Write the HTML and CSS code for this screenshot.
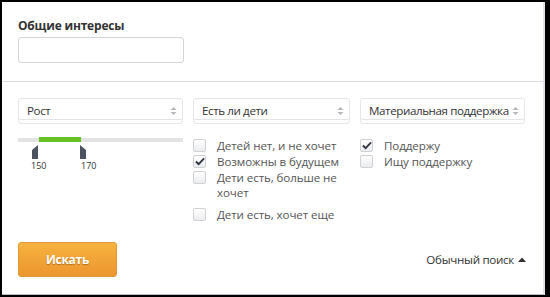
FILE: index.html
```html
<!DOCTYPE html>
<html lang="ru">
<head>
<meta charset="utf-8">
<link rel="stylesheet" href="styles.css">
</head>
<body>
<div class="panel">
  <div class="top">
    <div class="title">Общие интересы</div>
    <div class="input"></div>
  </div>
  <div class="filters">
    <div class="col">
      <div class="select"><span>Рост</span><svg class="arr" width="7" height="10" viewBox="0 0 7 10"><path d="M3.5 1 L6.5 4 H0.5 Z M3.5 9 L6.5 6 H0.5 Z" fill="#b5b8bd"/></svg></div>
      <div class="slider">
        <div class="track"><div class="fill"></div></div>
        <div class="handles">
          <div class="handle">
            <svg width="8" height="14" viewBox="0 0 8 14"><path d="M1 5 L7 0 V14 H1 Z" fill="#4b5362"/></svg>
            <span>150</span>
          </div>
          <div class="handle h2">
            <svg width="8" height="14" viewBox="0 0 8 14"><path d="M1 0 L7 5 V14 H1 Z" fill="#4b5362"/></svg>
            <span>170</span>
          </div>
        </div>
      </div>
    </div>
    <div class="col mid">
      <div class="select"><span>Есть ли дети</span><svg class="arr" width="7" height="10" viewBox="0 0 7 10"><path d="M3.5 1 L6.5 4 H0.5 Z M3.5 9 L6.5 6 H0.5 Z" fill="#b5b8bd"/></svg></div>
      <ul class="checks">
        <li><i class="cb"></i><span>Детей нет, и не хочет</span></li>
        <li><i class="cb on"><svg width="11" height="9" viewBox="0 0 11 9"><path d="M1 4.5 L4 7.5 L10 1" fill="none" stroke="#2f3540" stroke-width="2"/></svg></i><span>Возможны в будущем</span></li>
        <li class="wrap"><i class="cb"></i><span>Дети есть, больше не хочет</span></li>
        <li><i class="cb"></i><span>Дети есть, хочет еще</span></li>
      </ul>
    </div>
    <div class="col">
      <div class="select"><span>Материальная поддержка</span><svg class="arr" width="7" height="10" viewBox="0 0 7 10"><path d="M3.5 1 L6.5 4 H0.5 Z M3.5 9 L6.5 6 H0.5 Z" fill="#b5b8bd"/></svg></div>
      <ul class="checks">
        <li><i class="cb on"><svg width="11" height="9" viewBox="0 0 11 9"><path d="M1 4.5 L4 7.5 L10 1" fill="none" stroke="#2f3540" stroke-width="2"/></svg></i><span>Поддержу</span></li>
        <li><i class="cb"></i><span>Ищу поддержку</span></li>
      </ul>
    </div>
  </div>
  <div class="actions">
    <button class="btn">Искать</button>
    <a class="simple">Обычный поиск <svg width="8" height="5" viewBox="0 0 8 5"><path d="M0 5 L4 0.5 L8 5 Z" fill="#333"/></svg></a>
  </div>
</div>
</body>
</html>
```
FILE: styles.css
```css
html, body {
  margin: 0;
  padding: 0;
  background: #000;
}
body {
  padding: 2px 5px 2px 2px;
  width: 550px;
  height: 297px;
  box-sizing: border-box;
  font-family: "Open Sans", "Noto Sans", sans-serif;
  font-size: 11.6px;
  color: #333;
}
.panel {
  background: #fff;
  width: 543px;
  height: 293px;
  box-sizing: border-box;
  border-right: 2px solid #dfe3ea;
  border-bottom: 1px solid #b9bcc2;
}
.top {
  padding: 15px 16px 18px;
  border-bottom: 1px solid #dcdde2;
}
.title {
  font-weight: bold;
  font-size: 12px;
  line-height: 18px;
  color: #333;
  letter-spacing: -0.2px;
}
.input {
  margin-top: 2px;
  width: 164px;
  height: 24px;
  border: 1px solid #d4d5d8;
  border-radius: 3px;
  background: #fff;
}
.filters {
  display: flex;
  gap: 10px;
  padding: 16px 0 0 16px;
}
.col {
  width: 165px;
}
.col.mid {
  width: 157px;
}
.select {
  height: 26px;
  box-sizing: border-box;
  border: 1px solid #e6e7ea;
  border-radius: 3px;
  box-shadow: inset 0 -3px 0 #fff, inset 0 -4px 0 #e3e4e7;
  display: flex;
  align-items: center;
  justify-content: space-between;
  padding: 0 5px 1px 8px;
  white-space: nowrap;
  letter-spacing: -0.4px;
}
.slider {
  padding-top: 14px;
}
.track {
  height: 4px;
  background: #e2e3e4;
  position: relative;
}
.fill {
  margin-left: 21px;
  width: 42px;
  height: 5px;
  background: #66c224;
  position: relative;
  top: -1px;
}
.handles {
  display: flex;
  padding: 3px 0 0 13px;
  gap: 34px;
}
.handle {
  display: flex;
  flex-direction: column;
  align-items: flex-start;
  width: 16px;
}
.handle svg {
  display: block;
  margin-left: 0;
}
.handle.h2 svg {
  margin-left: -2px;
}
.handle span {
  font-size: 9px;
  line-height: 14px;
  color: #333;
}
.checks {
  list-style: none;
  margin: 14px 0 0;
  padding: 0;
  display: flex;
  flex-direction: column;
  gap: 1px;
}
.checks li {
  display: flex;
  align-items: flex-start;
  gap: 11px;
  color: #555;
  line-height: 15px;
}
.checks li.wrap {
  margin-bottom: 6px;
}
.checks li span {
  width: 140px;
  letter-spacing: -0.1px;
}
.cb {
  flex: none;
  width: 13px;
  height: 13px;
  box-sizing: border-box;
  border: 1px solid #d0d1d4;
  border-radius: 2px;
  background: linear-gradient(#fff, #ebecee);
  margin-top: 1px;
  display: flex;
  align-items: center;
  justify-content: center;
}
.cb svg {
  margin-left: 1px;
}
.actions {
  display: flex;
  align-items: center;
  justify-content: space-between;
  padding: 20px 17px 0 16px;
}
.btn {
  width: 99px;
  height: 35px;
  border: 1px solid #e09a3a;
  border-radius: 3px;
  background: linear-gradient(#f7b23d, #ec962f);
  color: #fff;
  font-family: "Open Sans", "Noto Sans", sans-serif;
  font-weight: bold;
  font-size: 12px;
  text-shadow: 0 1px 1px rgba(120, 60, 0, 0.5);
  letter-spacing: -0.3px;
  padding: 0;
}
.simple {
  color: #333;
  letter-spacing: -0.3px;
  display: flex;
  align-items: center;
  gap: 4px;
}
```
